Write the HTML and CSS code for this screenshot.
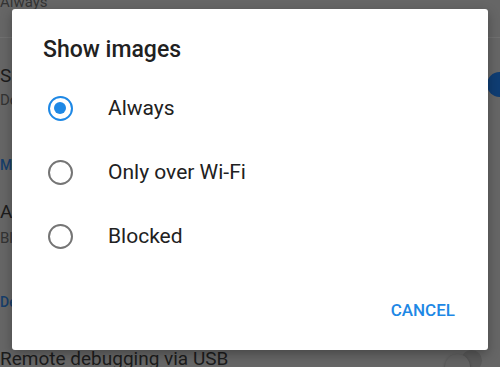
FILE: index.html
```html
<!DOCTYPE html>
<html>
<head>
    <title>Show images</title>
    <link rel="stylesheet" href="styles.css">
</head>
<body>

<div class="settings">
    <div class="sub first">Always</div>
    <div class="divider"></div>
    <div class="item item-one">
        <div class="texts">
            <div class="title">Show images</div>
            <div class="sub gap-one">Download images</div>
        </div>
        <div class="thumb on"></div>
    </div>
    <div class="category cat-one">Media</div>
    <div class="title title-two">Autoplay</div>
    <div class="sub gap-two">Blocked</div>
    <div class="category cat-two">Developer</div>
    <div class="item item-three">
        <div class="title">Remote debugging via USB</div>
        <div class="thumb off"></div>
    </div>
</div>

<div class="dialog">
    <h3>Show images</h3>
    <div class="options">
        <div class="option">
            <span class="radio checked"></span>
            <span class="label">Always</span>
        </div>
        <div class="option">
            <span class="radio"></span>
            <span class="label">Only over Wi-Fi</span>
        </div>
        <div class="option">
            <span class="radio"></span>
            <span class="label">Blocked</span>
        </div>
    </div>
    <div class="actions">
        <button>CANCEL</button>
    </div>
</div>

</body>
</html>
```

FILE: styles.css
```css
body {
    margin: 0;
    width: 500px;
    height: 367px;
    overflow: hidden;
    position: relative;
    background: #666666;
    font-family: Roboto, 'Noto Sans', sans-serif;
}

/* dimmed settings page behind the dialog */
.settings {
    display: flex;
    flex-direction: column;
    color: #1c1c1c;
}

.title {
    font-size: 19px;
    line-height: 22px;
    white-space: nowrap;
}

.sub {
    font-size: 15px;
    line-height: 18px;
    color: #333333;
    white-space: nowrap;
}

.sub.first {
    margin-top: -7px;
}

.divider {
    margin-top: 26px;
    height: 1px;
    background: #707070;
}

.item {
    display: flex;
    justify-content: space-between;
    align-items: center;
}

.item-one {
    margin-top: 26.5px;
}

.gap-one {
    margin-top: 4.5px;
}

.category {
    font-size: 14px;
    line-height: 16px;
    font-weight: 500;
    color: #163e6b;
}

.cat-one {
    margin-top: 48px;
}

.title-two {
    margin-top: 27.5px;
}

.gap-two {
    margin-top: 6.5px;
}

.cat-two {
    margin-top: 47px;
}

.item-three {
    margin-top: 29.5px;
}

.thumb {
    width: 25px;
    height: 25px;
    border-radius: 50%;
    flex-shrink: 0;
}

.thumb.on {
    background: #0f3d73;
    margin-right: -12px;
    margin-top: -5px;
}

.thumb.off {
    background: #636363;
    margin-right: 30px;
    margin-top: 14px;
    box-shadow: 0 1px 3px rgba(0, 0, 0, 0.35), 14px -6px 0 -2px #5a5a5a;
}

/* dialog */
.dialog {
    position: absolute;
    left: 12px;
    top: 9px;
    width: 476px;
    height: 341px;
    box-sizing: border-box;
    background: #ffffff;
    border-radius: 3px;
    box-shadow: 0 4px 12px rgba(0, 0, 0, 0.3);
    padding-top: 28px;
    display: flex;
    flex-direction: column;
}

h3 {
    margin: 0 0 0 31px;
    font-size: 23px;
    line-height: 26px;
    font-weight: 500;
    color: #212121;
}

.options {
    margin-top: 13px;
    display: flex;
    flex-direction: column;
}

.option {
    height: 64px;
    display: flex;
    align-items: center;
    padding-left: 35.5px;
}

.radio {
    width: 25px;
    height: 25px;
    box-sizing: border-box;
    border: 2.5px solid #757575;
    border-radius: 50%;
    display: flex;
    align-items: center;
    justify-content: center;
}

.radio.checked {
    border-color: #1e88e5;
}

.radio.checked::after {
    content: "";
    width: 12.5px;
    height: 12.5px;
    border-radius: 50%;
    background: #1e88e5;
}

.label {
    margin-left: 35.5px;
    font-size: 21px;
    line-height: 24px;
    color: #212121;
}

.actions {
    margin-top: 31.5px;
    display: flex;
    justify-content: flex-end;
    padding-right: 33px;
}

button {
    background: none;
    border: none;
    padding: 0;
    font-family: Roboto, 'Noto Sans', sans-serif;
    font-size: 17px;
    line-height: 20px;
    font-weight: 500;
    color: #1e88e5;
}
```
